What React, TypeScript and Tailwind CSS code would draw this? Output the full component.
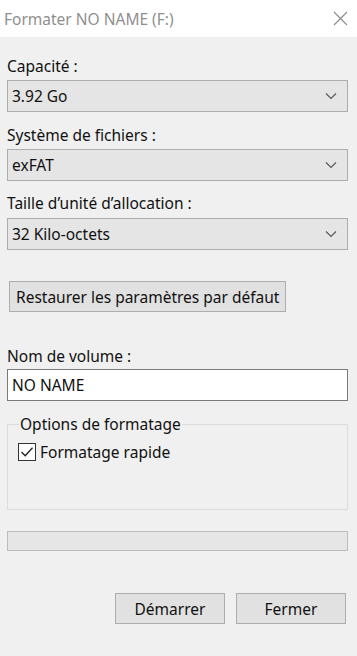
import React from "react";

const Chevron = () => (
  <svg width="12" height="8" viewBox="0 0 12 8" className="shrink-0">
    <path d="M1 1.5 L6 6.5 L11 1.5" fill="none" stroke="#5a5a5a" strokeWidth="1.2" />
  </svg>
);

const Select = ({ value, className = "" }: { value: string; className?: string }) => (
  <div
    className={`flex h-[32px] items-center justify-between border border-[#adadad] bg-[#e5e5e5] pl-[4px] pr-[10px] text-[#111111] ${className}`}
  >
    <span>{value}</span>
    <Chevron />
  </div>
);

export default function App() {
  return (
    <div
      className="flex h-[656px] w-[357px] flex-col bg-[#f0f0f0] text-[15.5px] leading-[20px] text-[#111111]"
      style={{ fontFamily: '"Noto Sans", "Open Sans", sans-serif' }}
    >
      <div className="flex h-[37px] shrink-0 items-center justify-between bg-white pl-[4px] pr-[9px]">
        <span className="text-[#8f8f8f]">Formater NO NAME (F:)</span>
        <svg width="15" height="15" viewBox="0 0 15 15">
          <path d="M1 1 L14 14 M14 1 L1 14" stroke="#8a8a8a" strokeWidth="1.1" />
        </svg>
      </div>
      <div className="flex flex-col pl-[7px] pr-[9px]">
        <div className="mt-[19px] h-[20px]">Capacité :</div>
        <Select value="3.92 Go" className="mt-[4px]" />
        <div className="mt-[13px] h-[20px]">Système de fichiers :</div>
        <Select value="exFAT" className="mt-[4px]" />
        <div className="mt-[12px] h-[20px]">Taille d’unité d’allocation :</div>
        <Select value="32 Kilo-octets" className="mt-[5px]" />
        <div className="mt-[31px] flex">
          <button className="ml-[2px] h-[31px] border border-[#adadad] bg-[#e1e1e1] px-[6px] text-[#111111]">
            Restaurer les paramètres par défaut
          </button>
        </div>
        <div className="mt-[34px] h-[20px]">Nom de volume :</div>
        <div className="mt-[3px] flex h-[32px] items-center border border-[#7a7a7a] bg-white pl-[4px]">
          NO NAME
        </div>
        <div className="relative mt-[23px] h-[86px] border border-[#dcdcdc]">
          <span className="absolute left-[11px] top-[-11px] bg-[#f0f0f0] px-[1px]">Options de formatage</span>
          <div className="ml-[10px] mt-[17px] flex items-center gap-[4px]">
            <div className="flex h-[18px] w-[18px] items-center justify-center border border-[#333333] bg-white">
              <svg width="14" height="12" viewBox="0 0 14 12">
                <path d="M1.5 6 L5.2 9.8 L12.5 1.8" fill="none" stroke="#222" strokeWidth="1.3" />
              </svg>
            </div>
            <span>Formatage rapide</span>
          </div>
        </div>
        <div className="mt-[21px] h-[20px] border border-[#bcbcbc] bg-[#e6e6e6]" />
        <div className="mt-[42px] flex justify-end gap-[11px] pr-[2px]">
          <button className="h-[31px] w-[110px] border border-[#adadad] bg-[#e1e1e1] text-[#111111]">Démarrer</button>
          <button className="h-[31px] w-[110px] border border-[#adadad] bg-[#e1e1e1] text-[#111111]">Fermer</button>
        </div>
      </div>
    </div>
  );
}
